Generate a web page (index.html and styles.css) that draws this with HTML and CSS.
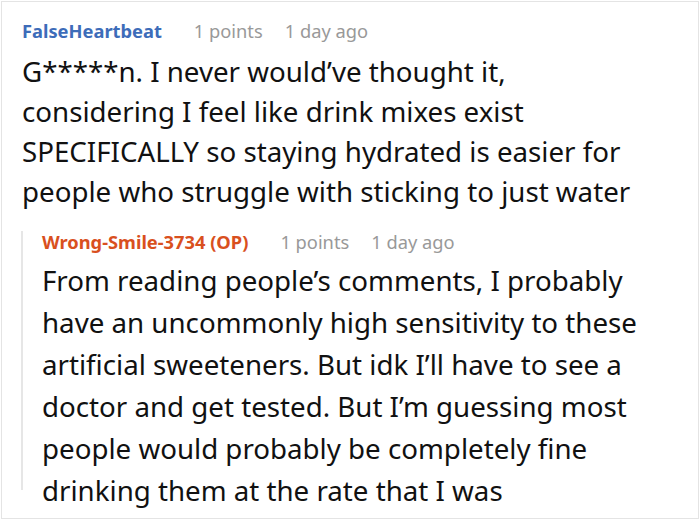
FILE: index.html
```html
<!DOCTYPE html>
<html>
<head>
<meta charset="utf-8">
<link rel="stylesheet" href="styles.css">
</head>
<body>
<div class="card">
  <div class="comment">
    <div class="meta">
      <span class="author">FalseHeartbeat</span>
      <span class="info">1 points</span>
      <span class="info">1 day ago</span>
    </div>
    <p class="body">G*****n. I never would’ve thought it, considering I feel like drink mixes exist SPECIFICALLY so staying hydrated is easier for people who struggle with sticking to just water</p>
  </div>
  <div class="reply">
    <div class="meta reply-meta">
      <span class="author op">Wrong-Smile-3734 (OP)</span>
      <span class="info">1 points</span>
      <span class="info">1 day ago</span>
    </div>
    <p class="body reply-body">From reading people’s comments, I probably have an uncommonly high sensitivity to these artificial sweeteners. But idk I’ll have to see a doctor and get tested. But I’m guessing most people would probably be completely fine drinking them at the rate that I was</p>
  </div>
</div>
</body>
</html>
```

FILE: styles.css
```css
html, body {
  margin: 0;
  padding: 0;
  background: #fff;
}
body {
  padding: 1px;
  font-family: "Noto Sans", "Open Sans", sans-serif;
  color: #111;
}
.card {
  box-sizing: border-box;
  width: 698px;
  height: 518px;
  border: 1px solid #e4e4e4;
  padding: 14px 46px 0 20px;
  overflow: hidden;
}
.meta {
  display: flex;
  gap: 22px;
  font-size: 18.3px;
  line-height: 30px;
}
.author {
  font-weight: 700;
  color: #3d6cb9;
  margin-right: 10px;
}
.author.op {
  color: #d9501e;
}
.info {
  color: #999;
}
.body {
  margin: 5px 0 0;
  font-size: 27.7px;
  line-height: 40px;
}
.reply {
  box-sizing: border-box;
  height: 259px;
  margin: 31px 0 0 -1px;
  border-left: 2px solid #e6e6e6;
  padding-left: 19px;
}
.reply-meta {
  line-height: 22px;
  margin-top: -11px;
}
.reply-body {
  margin-top: 6px;
  line-height: 42px;
}
```
